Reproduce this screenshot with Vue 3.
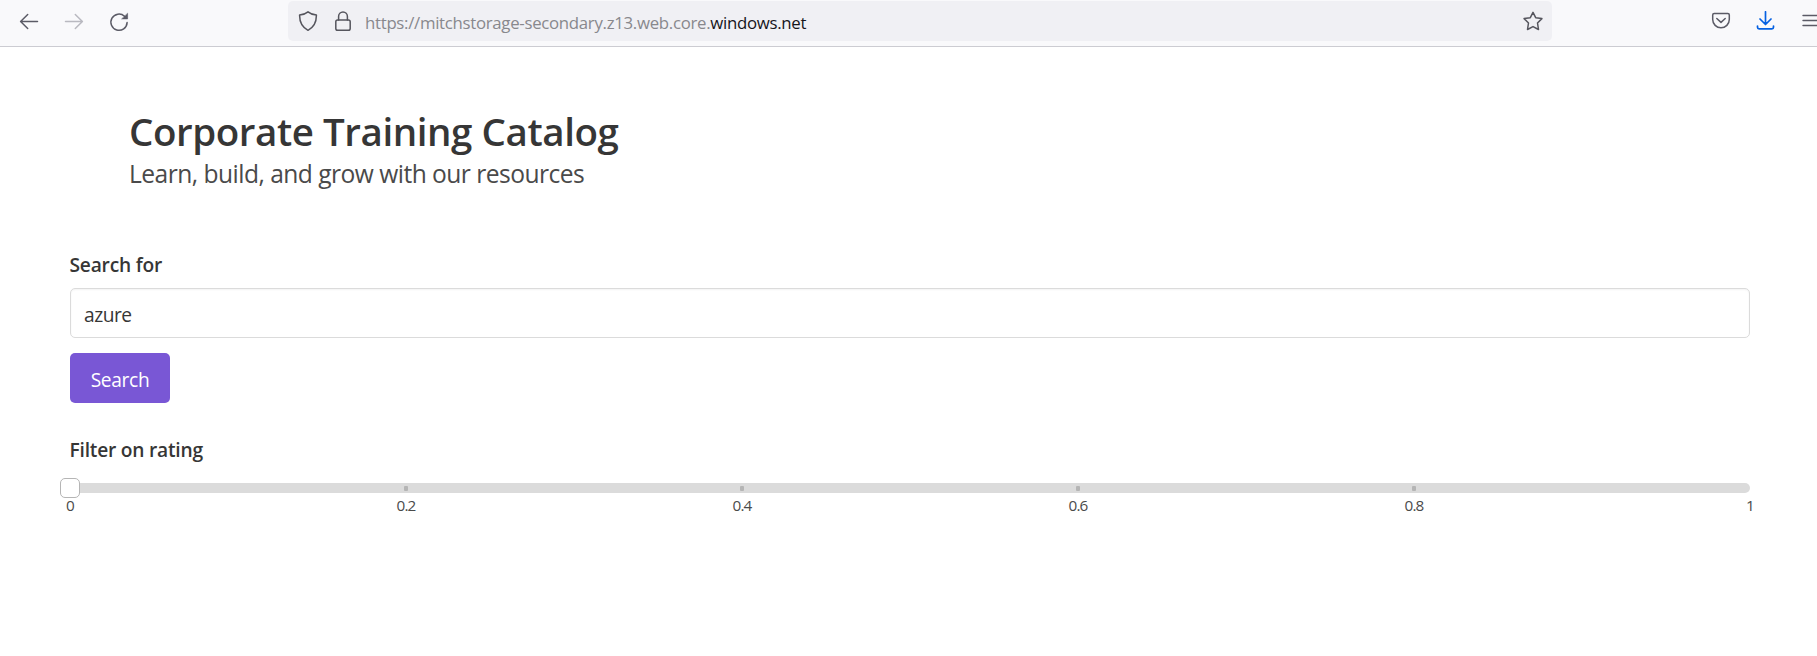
<script setup>
import { ref } from 'vue'

const query = ref('azure')
const ticks = [0, 0.2, 0.4, 0.6, 0.8, 1]
</script>

<template>
  <div class="window">
    <header class="toolbar">
      <div class="nav">
        <svg class="icon" viewBox="0 0 20 20"><path d="M18.500 9.500H1.800M8.700 2.500L1.600 9.500L8.700 16.500" /></svg>
        <svg class="icon dim" viewBox="0 0 20 20"><path d="M1.500 9.500H18.200M11.300 2.500L18.400 9.500L11.300 16.500" /></svg>
        <svg class="icon" viewBox="0 0 20 20">
          <path d="M15.500 4.200A8.100 8.100 0 1 0 18.100 10.600" />
          <path class="solid" d="M18.600 1.600V6.900H13Z" />
        </svg>
      </div>
      <div class="address">
        <svg class="icon mark" viewBox="0 0 20 20"><path d="M10 .8C7.500 2.800 4.600 3.800 1.600 4.100C1.500 10.300 3 15.600 10 19.300C17 15.600 18.500 10.300 18.400 4.100C15.400 3.800 12.500 2.800 10 .8Z" /></svg>
        <svg class="icon lock mark" viewBox="0 0 20 20">
          <rect x="2.800" y="9" width="14.400" height="10.200" rx="1.800" />
          <path d="M5.600 9V5.500A4.400 4.400 0 0 1 14.400 5.500V9" />
        </svg>
        <span class="url">https://mitchstorage-secondary.z13.web.core.<b>windows.net</b></span>
        <svg class="icon mark star" viewBox="0 0 20 20"><path d="M10 1.300L12.700 6.700L18.900 7.600L14.500 12L15.500 18.500L10 15.600L4.500 18.500L5.500 12L1.100 7.600L7.300 6.700Z" /></svg>
      </div>
      <div class="actions">
        <svg class="icon" viewBox="0 0 20 20">
          <path d="M3.200 2.600H16.800Q18.300 2.600 18.300 4.100V8.500A8.300 8.300 0 0 1 1.700 8.500V4.100Q1.700 2.600 3.200 2.600Z" />
          <path d="M5.800 7.500L10 11.400L14.200 7.500" />
        </svg>
        <svg class="icon blue" viewBox="0 0 20 20"><path d="M9.500 0.800V13.200M4 8L9.500 13.500L15 8M1.500 15V16.200Q1.500 17.800 3.100 17.800H15.900Q17.500 17.800 17.500 16.200V15" /></svg>
        <svg class="icon menu" viewBox="0 0 20 20"><path d="M1 4.500H19M1 9.500H19M1 14.500H19" /></svg>
      </div>
    </header>

    <main class="page">
      <section class="hero">
        <h1><span>Corporate Training Catalog</span></h1>
        <p><span>Learn, build, and grow with our resources</span></p>
      </section>

      <label class="label search-label" for="query">Search for</label>
      <input id="query" v-model="query" class="field" type="text" />
      <button class="button" type="button">Search</button>

      <div class="label filter-label">Filter on rating</div>
      <div class="slider">
        <div class="thumb"></div>
        <div
          v-for="tick in ticks"
          :key="tick"
          class="tick"
          :class="{ end: tick === 0 || tick === 1 }"
          :style="{ left: tick * 100 + '%' }"
        >
          <i></i>
          <span>{{ tick }}</span>
        </div>
      </div>
    </main>
  </div>
</template>

<style>
html, body { overflow: hidden; background: #fff; }
</style>

<style scoped>
* { box-sizing: border-box; }
.window {
  height: 656px;
  overflow: hidden;
  font-family: "Open Sans", "Noto Sans", sans-serif;
  color: #363636;
}
.toolbar {
  display: flex;
  width: 1830px;
  height: 47px;
  padding-top: 1px;
  background: #f9f9fb;
  border-bottom: 1px solid #ccccd2;
}
.nav { display: flex; width: 288px; padding: 11px 0 0 19px; gap: 25px; }
.icon {
  flex: none;
  width: 20px;
  height: 20px;
  fill: none;
  stroke: #5b5b66;
  stroke-width: 1.5;
  stroke-linecap: round;
  stroke-linejoin: round;
}
.dim { stroke: #b9b9c0; }
.solid { fill: #5b5b66; stroke-width: .6; }
.blue { stroke: #0561e2; stroke-width: 1.7; }
.address {
  display: flex;
  width: 1264px;
  height: 40px;
  padding: 0 9px 0 10px;
  border-radius: 5px;
  background: #f0f0f4;
}
.mark { margin-top: 10px; stroke: #55555d; }
.lock { margin-left: 15px; }
.url {
  margin-left: 12px;
  font-size: 16.800px;
  line-height: 43px;
  letter-spacing: -.29px;
  color: #88888d;
  white-space: nowrap;
}
.url b { font-weight: 400; color: #15141a; }
.star { margin-left: auto; }
.actions { display: flex; padding: 10px 0 0 159px; gap: 25px; }
.menu { margin-left: 1px; stroke-width: 1.4; }
.page { width: 1680px; margin-left: 70px; }
.hero { height: 203px; padding: 62px 0 0 59px; }
h1, p { margin: 0; white-space: nowrap; }
h1 { font-size: 38.500px; line-height: 45px; font-weight: 600; letter-spacing: -.43px; }
p { margin-top: 3px; font-size: 24.600px; line-height: 34px; letter-spacing: -.53px; color: #4a4a4a; }
.label { display: block; width: max-content; margin-left: -.5px; font-size: 19.200px; line-height: 30px; font-weight: 600; letter-spacing: -.22px; white-space: nowrap; }
.field {
  display: block;
  width: 100%;
  height: 50px;
  margin-top: 8px;
  padding: 3px 13px 0;
  border: 1px solid #dbdbdb;
  border-radius: 5px;
  box-shadow: inset 0 1px 2px rgba(10, 10, 10, .05);
  background: #fff;
  color: #363636;
  font: 19.200px "Open Sans", sans-serif;
  letter-spacing: -.5px;
  outline: 0;
}
.button {
  display: block;
  width: 100px;
  height: 50px;
  margin-top: 15px;
  padding: 3px 0 0;
  border: 0;
  border-radius: 5px;
  background: #7957d5;
  color: #fff;
  font: 19.200px "Open Sans", sans-serif;
  letter-spacing: -.35px;
}
.filter-label { margin-top: 32px; }
.slider {
  position: relative;
  height: 10px;
  margin-top: 18px;
  border-radius: 5px;
  background: #dbdbdb;
}
.thumb {
  position: absolute;
  z-index: 1;
  left: -10px;
  top: -5px;
  width: 20px;
  height: 20px;
  border: 1px solid #b5b5b5;
  border-radius: 5px;
  background: #fff;
}
.tick { position: absolute; top: 3px; width: 0; display: flex; flex-direction: column; align-items: center; }
.tick i { flex: none; width: 4px; height: 5px; border-radius: 1px; background: #b5b5b5; }
.end i { visibility: hidden; }
.tick span { margin-top: 4px; font-size: 15.300px; line-height: 20px; letter-spacing: -.8px; color: #4a4a4a; }
</style>
